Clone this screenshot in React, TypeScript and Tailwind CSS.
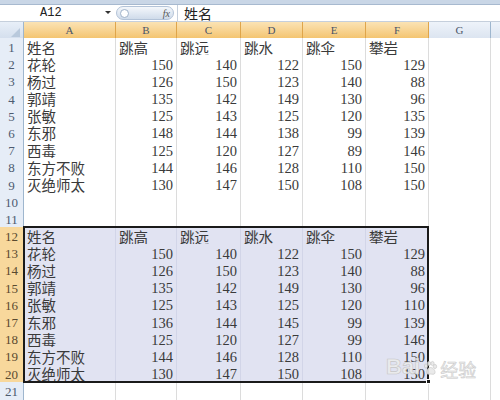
import React from "react";

const cols = "grid grid-cols-[24px_92px_61px_64px_62px_63px_63px_62px_1fr]";
const heads = ["跳高", "跳远", "跳水", "跳伞", "攀岩"];
const t1: [string, number[]][] = [
  ["花轮", [150, 140, 122, 150, 129]],
  ["杨过", [126, 150, 123, 140, 88]],
  ["郭靖", [135, 142, 149, 130, 96]],
  ["张敏", [125, 143, 125, 120, 135]],
  ["东邪", [148, 144, 138, 99, 139]],
  ["西毒", [125, 120, 127, 89, 146]],
  ["东方不败", [144, 146, 128, 110, 150]],
  ["灭绝师太", [130, 147, 150, 108, 150]],
];
const t2: [string, number[]][] = [
  ["花轮", [150, 140, 122, 150, 129]],
  ["杨过", [126, 150, 123, 140, 88]],
  ["郭靖", [135, 142, 149, 130, 96]],
  ["张敏", [125, 143, 125, 120, 110]],
  ["东邪", [136, 144, 145, 99, 139]],
  ["西毒", [125, 120, 127, 99, 146]],
  ["东方不败", [144, 146, 128, 110, 150]],
  ["灭绝师太", [130, 147, 150, 108, 150]],
];

type Row = { name?: string; vals?: (string | number)[]; header?: boolean };

const rows: Row[] = [];
rows.push({ name: "姓名", vals: heads, header: true });
t1.forEach(([n, v]) => rows.push({ name: n, vals: v }));
rows.push({});
rows.push({});
rows.push({ name: "姓名", vals: heads, header: true });
t2.forEach(([n, v]) => rows.push({ name: n, vals: v }));
rows.push({});

const cjk = { fontFamily: '"Noto Sans CJK SC", sans-serif' };
const num = { fontFamily: '"Liberation Serif", serif' };

export default function App() {
  return (
    <div className="w-[500px] h-[400px] overflow-hidden bg-white relative">
      {/* top strip */}
      <div className="h-[5px] bg-[#c9d6e6] border-b border-[#a7b9cf]" />
      {/* formula bar */}
      <div className="h-[17px] flex items-center bg-white border-b border-[#c5cfdc]">
        <div className="w-[113px] h-full flex items-center relative">
          <span className="ml-[40px] text-[12px] text-[#222]" style={{ fontFamily: '"Liberation Mono", monospace' }}>A12</span>
          <span className="absolute left-[105px] top-[6px] w-0 h-0 border-l-[3px] border-r-[3px] border-t-[3px] border-l-transparent border-r-transparent border-t-[#333]" />
        </div>
        <div className="w-[58px] h-[14px] ml-[3px] rounded-full bg-gradient-to-b from-[#f4f7fb] to-[#cfdbea] border border-[#b3c3d8] flex items-center justify-between px-[3px]">
          <span className="w-[9px] h-[9px] rounded-full border border-[#9fb2c9] bg-white" />
          <span className="text-[10px] italic text-[#555]" style={num}>fx</span>
        </div>
        <div className="w-px h-full bg-[#c5cfdc] ml-[3px]" />
        <span className="ml-[6px] text-[14px] text-[#222]" style={cjk}>姓名</span>
      </div>
      {/* column headers */}
      <div className={`${cols} h-[16px] text-[11px] text-[#4a5568]`} style={num}>
        <div className="bg-gradient-to-b from-[#e8eff8] to-[#d3deed] border-r border-b border-[#9eb6ce] relative">
          <span className="absolute right-[3px] bottom-[2px] w-0 h-0 border-l-[9px] border-l-transparent border-b-[9px] border-b-[#b9c9dc]" />
        </div>
        {["A", "B", "C", "D", "E", "F"].map((c) => (
          <div key={c} className="bg-gradient-to-b from-[#fbe3b4] to-[#f3c36c] border-r border-b border-[#dfa54a] flex items-center justify-center">{c}</div>
        ))}
        <div className="bg-gradient-to-b from-[#eef3fa] to-[#dbe4f0] border-r border-b border-[#9eb6ce] flex items-center justify-center">G</div>
        <div className="bg-gradient-to-b from-[#eef3fa] to-[#dbe4f0] border-b border-[#9eb6ce]" />
      </div>
      {/* body */}
      <div className="relative">
        {rows.map((r, i) => {
          const rn = i + 1;
          const sel = rn >= 12 && rn <= 20;
          const cellBg = sel ? "bg-[#e1e3f2] border-[#d2d5e8]" : "bg-white border-[#dcdcdc]";
          return (
            <div key={i} className={`${cols} h-[17.2px]`}>
              <div
                className={`flex items-center justify-center text-[13px] border-r border-b ${sel ? "bg-[#f8d89c] border-[#e5ac55] text-[#5a4a30]" : "bg-[#e6edf7] border-[#9eb6ce] text-[#4d5b70]"}`}
                style={num}
              >
                {rn}
              </div>
              <div className={`border-r border-b ${cellBg} flex items-center pl-[3px] text-[14.5px] text-[#3a3a3a] leading-none whitespace-nowrap overflow-hidden`} style={cjk}>
                {r.name ?? ""}
              </div>
              {[0, 1, 2, 3, 4].map((k) => {
                const v = r.vals ? r.vals[k] : "";
                return (
                  <div
                    key={k}
                    className={`border-r border-b ${cellBg} flex items-center leading-none whitespace-nowrap overflow-hidden text-[#3a3a3a] ${r.header ? "justify-start pl-[3px] text-[14.5px]" : "justify-end pr-[3px] text-[14.5px]"}`}
                    style={r.header ? cjk : num}
                  >
                    {v}
                  </div>
                );
              })}
              <div className="border-r border-b border-[#dcdcdc] bg-white" />
              <div className="border-b border-[#dcdcdc] bg-white" />
            </div>
          );
        })}
        {/* selection border */}
        <div className="absolute left-[23px] top-[188.2px] w-[406px] h-[156.8px] border-[2.5px] border-[#1a1a1a] pointer-events-none" />
        <div className="absolute left-[426px] top-[341px] w-[5px] h-[5px] bg-[#1a1a1a] border border-white" />
      </div>
      {/* watermark */}
      <div className="absolute left-[386px] top-[356px] flex items-end gap-[2px] text-[#ececec] opacity-90 pointer-events-none">
        <span className="text-[22px] font-bold leading-none" style={{ fontFamily: '"Liberation Sans", sans-serif', WebkitTextStroke: "0.6px #c4c4c4" }}>Bai</span>
        <svg width="16" height="16" viewBox="0 0 16 16" className="mb-[2px]">
          <g fill="#e8e8e8" stroke="#c4c4c4" strokeWidth="0.7">
            <ellipse cx="4" cy="6" rx="1.6" ry="2.1" />
            <ellipse cx="7" cy="3.5" rx="1.6" ry="2.1" />
            <ellipse cx="10.5" cy="3.5" rx="1.6" ry="2.1" />
            <ellipse cx="13" cy="6.5" rx="1.6" ry="2.1" />
            <path d="M8.5 7.5 C5.5 7.5 4 11 4.5 13 C5 15 8 14 8.7 14 C9.5 14 12.5 15 13 13 C13.5 11 11.5 7.5 8.5 7.5 Z" />
          </g>
        </svg>
        <span className="text-[18px] leading-none" style={{ ...cjk, WebkitTextStroke: "0.5px #c4c4c4" }}>经验</span>
      </div>
    </div>
  );
}
